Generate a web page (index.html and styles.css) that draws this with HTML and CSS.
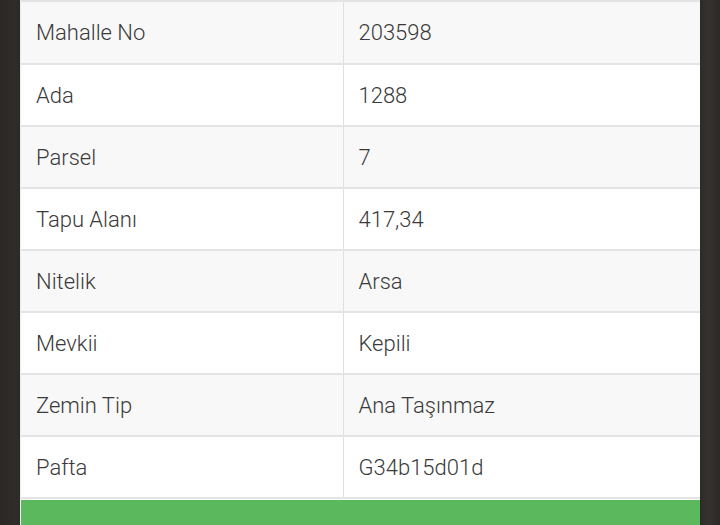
FILE: index.html
```html
<!DOCTYPE html>
<html lang="tr">
<head>
<meta charset="utf-8">
<link rel="stylesheet" href="styles.css">
</head>
<body>
<div class="page">
  <div class="panel">
    <table class="info">
      <tr><td>Mahalle No</td><td>203598</td></tr>
      <tr><td>Ada</td><td>1288</td></tr>
      <tr><td>Parsel</td><td>7</td></tr>
      <tr><td>Tapu Alanı</td><td>417,34</td></tr>
      <tr><td>Nitelik</td><td>Arsa</td></tr>
      <tr><td>Mevkii</td><td>Kepili</td></tr>
      <tr><td>Zemin Tip</td><td>Ana Taşınmaz</td></tr>
      <tr><td>Pafta</td><td>G34b15d01d</td></tr>
    </table>
    <div class="action"></div>
  </div>
</div>
</body>
</html>
```
FILE: styles.css
```css
html, body {
  margin: 0;
  padding: 0;
  height: 100%;
  overflow: hidden;
}
body {
  background: linear-gradient(90deg, #2a2725 0%, #2f2c2a 2%, #2b2927 3%, #2c2a28 97%, #35322f 98.5%, #2b2826 100%);
  font-family: Roboto, "Noto Sans", sans-serif;
}
.page {
  padding: 0 20px;
}
.panel {
  background: #fff;
  width: 680px;
  border-left: 1px solid #ececec;
  box-sizing: border-box;
}
.info {
  width: 100%;
  border-collapse: collapse;
  table-layout: fixed;
}
.info td {
  height: 62px;
  padding: 0 15px;
  border: 2px solid #e4e4e4;
  border-left: 0;
  font-size: 22px;
  font-weight: 300;
  color: #3a3a3a;
  vertical-align: middle;
  box-sizing: border-box;
}
.info td:first-child {
  width: 322px;
  border-right: 1px solid #e0e0e0;
  padding-left: 15px;
}
.info td:last-child {
  border-right: 0;
}
.info tr:nth-child(odd) td {
  background: #f8f8f8;
}
.info tr:first-child td {
  height: 63px;
  border-top: 2px solid #e4e4e4;
}
.action {
  height: 40px;
  margin-top: 1px;
  background: #5cb85c;
}
```
